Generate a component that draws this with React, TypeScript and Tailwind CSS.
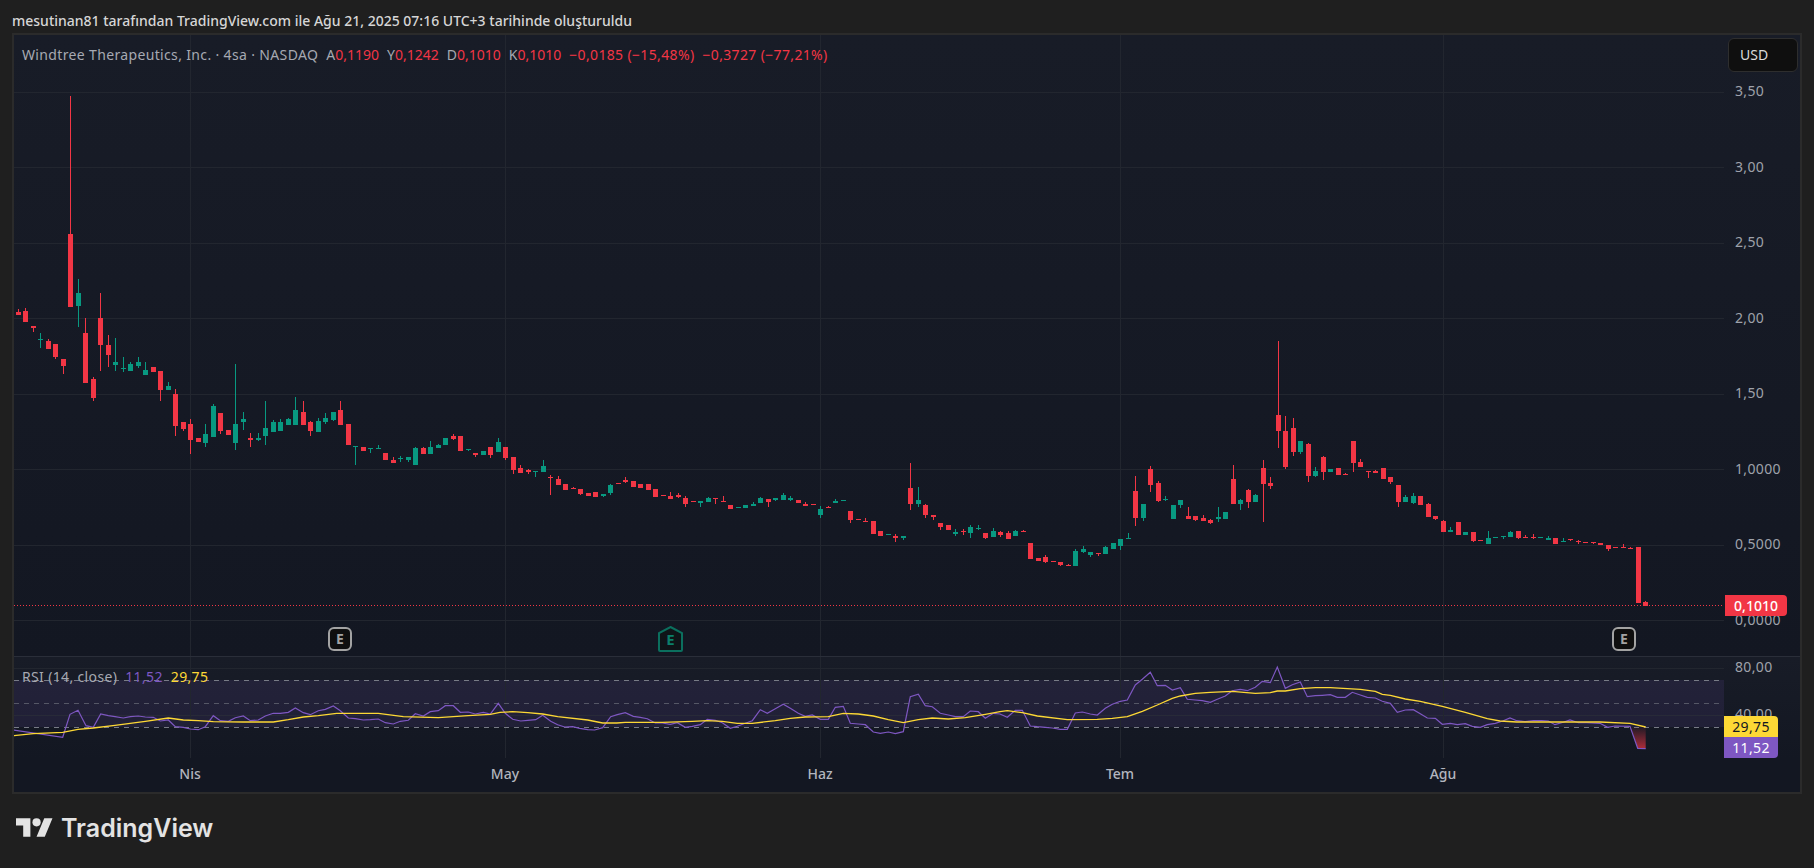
import React from 'react';

const RED = '#f23645';
const GREEN = '#089981';

// candle rows: x, wick top, body top, body bottom, wick bottom, 1 = up. Values are in 1/3 px relative to the group origin
type Row = [number, number, number, number, number, number];

const groupA: Row[] = [
  [55,687,696,705,705,0],[76,684,693,726,726,0],[100,738,738,744,756,0],[121,759,777,780,804,1],[145,777,783,807,807,0],[166,792,792,831,837,0],[190,837,837,858,882,0],[211,48,462,681,681,0],[235,597,639,678,741,1],[256,714,759,909,909,0],[280,891,897,954,963,0],[301,639,714,795,873,0],[325,765,795,825,861,0],[346,774,846,855,873,1],[370,831,864,867,876,1],[391,846,852,873,873,1],[415,831,846,858,864,1],[436,846,870,885,885,1],[460,861,861,876,876,0],[481,873,873,930,963,0],[505,906,918,930,930,1],[526,927,942,1038,1068,0],[550,1026,1026,1047,1053,0],[571,1017,1032,1080,1122,0],[595,1074,1074,1086,1086,0],[616,1032,1062,1089,1101,1],[640,972,978,1071,1071,1],[661,999,999,1053,1062,0],[685,1050,1050,1065,1065,0],[706,852,1032,1089,1110,1],[730,996,1017,1026,1050,1],[751,1059,1074,1080,1101,0],[775,1059,1074,1080,1083,1],[796,963,1044,1068,1095,1],[820,1020,1026,1056,1056,1],[841,1017,1026,1053,1053,1],[865,1014,1017,1035,1035,1],[886,951,990,1035,1035,1],[910,963,996,1035,1035,0],[931,1023,1026,1053,1068,0],[955,1014,1023,1056,1056,1],[976,999,1014,1026,1032,1],[1000,996,996,1020,1023,1],[1021,963,990,1035,1035,0],[1045,1032,1032,1095,1095,0],[1066,1098,1098,1101,1155,1],[1090,1101,1101,1113,1113,0],[1111,1104,1105,1108,1119,1],[1135,1095,1104,1107,1107,1],[1156,1119,1119,1140,1140,0],[1180,1131,1140,1149,1149,0],[1201,1128,1134,1137,1146,1],[1225,1131,1131,1140,1146,1],[1246,1101,1104,1155,1155,1],[1270,1101,1104,1122,1122,0],[1291,1083,1101,1122,1122,1],[1315,1092,1095,1104,1104,1],[1336,1074,1074,1095,1095,1],
];

const groupB: Row[] = [
  [40,162,168,177,180,0],[61,168,168,213,213,0],[85,207,207,210,213,1],[106,219,219,225,231,0],[130,213,213,225,225,1],[151,201,201,225,234,0],[175,174,186,216,216,1],[196,201,201,234,240,0],[220,231,231,270,282,0],[241,255,264,279,279,0],[265,267,271,275,282,0],[286,273,273,276,291,1],[310,240,258,276,276,1],[331,285,291,294,345,0],[355,288,297,315,315,0],[376,312,312,330,330,0],[400,321,324,327,327,0],[421,327,327,342,345,0],[445,339,339,348,348,0],[466,336,336,351,351,0],[490,342,342,348,351,1],[511,312,315,339,345,1],[535,309,309,312,312,0],[556,291,300,306,309,0],[580,303,303,321,321,0],[601,312,312,324,324,0],[625,312,312,330,330,0],[646,327,327,351,351,0],[670,345,345,348,348,0],[691,336,348,357,357,0],[715,339,345,351,354,0],[736,348,354,372,381,0],[760,363,363,366,366,0],[781,363,363,369,381,1],[805,351,354,366,366,1],[826,354,355,358,372,0],[850,348,363,366,366,0],[871,375,375,387,387,0],[895,381,381,384,384,1],[916,375,375,384,384,1],[940,366,372,378,378,1],[961,351,354,369,369,1],[985,357,357,366,381,0],[1006,354,354,360,363,1],[1030,339,345,360,360,1],[1051,348,354,360,363,1],[1075,360,360,369,369,0],[1096,366,372,378,378,0],[1120,372,372,375,375,0],[1141,378,387,405,414,1],[1165,378,381,384,384,0],[1186,357,363,369,369,1],[1210,360,360,363,363,1],[1231,393,393,420,429,0],[1255,417,417,420,420,0],[1276,414,423,426,426,0],[1300,423,423,462,462,0],[1321,453,453,468,468,0],[1345,462,462,465,465,1],[1366,462,468,474,486,0],[1390,468,468,474,480,1],
];

const groupC: Row[] = [
  [31,429,504,552,570,0],[55,501,540,552,561,1],[76,552,555,585,594,0],[100,585,585,591,600,0],[121,609,609,621,630,0],[145,615,615,630,630,0],[166,627,636,642,648,1],[190,627,633,636,645,0],[211,615,621,639,654,1],[235,615,624,627,630,1],[256,639,639,654,657,0],[280,624,633,651,651,1],[301,633,636,645,651,0],[325,633,639,657,657,0],[346,630,633,648,648,1],[370,630,633,636,636,0],[391,669,669,717,717,0],[415,714,714,723,723,0],[436,705,711,726,729,0],[460,723,723,726,726,0],[481,726,726,735,738,0],[505,732,735,738,738,0],[526,687,693,738,738,1],[550,678,687,696,699,1],[571,696,696,705,711,1],[595,699,699,702,708,0],[616,678,681,702,702,1],[640,669,669,687,687,1],[661,657,657,678,690,1],[685,639,654,657,657,1],[706,468,513,594,618,0],[730,552,552,594,603,1],[751,438,447,495,516,0],[775,483,489,543,546,0],[796,528,537,540,543,1],[820,555,555,597,597,1],[841,540,540,555,564,1],[865,561,588,597,597,0],[886,588,588,600,603,0],[910,585,594,603,603,0],[931,597,600,609,612,0],[955,561,591,597,606,1],[976,576,576,597,597,1],[1000,435,477,552,552,0],[1021,537,540,552,570,1],[1045,507,510,546,564,0],[1066,522,525,546,546,1],[1090,420,444,492,606,0],[1111,471,489,498,507,0],[1135,63,285,333,384,0],[1156,288,333,441,447,0],[1180,294,324,396,408,0],[1201,363,363,396,402,1],[1225,369,372,468,486,0],[1246,441,453,468,471,1],[1270,408,411,456,480,0],[1291,447,447,456,456,1],[1315,444,444,465,465,0],[1336,459,462,465,465,0],[1360,363,363,429,456,0],[1381,417,426,441,441,0],[1405,453,453,456,474,0],[1426,450,453,459,459,0],[1450,444,444,477,477,0],[1471,471,471,486,492,0],[1495,495,495,546,561,0],
];

const groupD: Row[] = [
  [16,165,171,186,186,1],[40,159,168,189,192,1],[61,168,168,195,195,0],[85,189,192,231,231,0],[106,228,228,237,240,0],[130,240,243,276,276,0],[151,261,270,276,276,1],[175,246,246,285,285,0],[196,276,276,285,285,1],[220,276,276,303,306,0],[241,300,300,303,303,0],[265,273,294,312,312,1],[286,291,291,294,294,1],[310,288,288,291,297,1],[331,273,276,291,291,1],[355,273,273,294,297,0],[376,285,291,294,294,0],[400,282,291,294,297,0],[421,291,291,294,294,1],[445,288,294,300,300,1],[466,294,294,312,312,0],[490,294,303,306,306,1],[511,297,297,300,303,0],[535,300,304,307,312,0],[556,306,306,309,309,0],[580,306,306,309,312,0],[601,309,309,315,315,0],[625,315,315,327,333,0],[646,321,321,324,324,0],[670,312,321,324,324,0],[691,321,324,327,327,0],[715,321,321,489,489,0],[736,483,486,498,498,0],
];

const candleGroups: { x0: number; y0: number; rows: Row[] }[] = [
  { x0: 0, y0: 80, rows: groupA },
  { x0: 440, y0: 380, rows: groupB },
  { x0: 900, y0: 320, rows: groupC },
  { x0: 1400, y0: 440, rows: groupD },
];

// rsi traces, same 1/3 px units
type Trace = { x0: number; pts: number[][] };

const rsiLine: Trace[] = [
  { x0: 0, pts: [[40,240],[188,262],[210,193],[234,181],[258,227],[280,232],[302,192],[325,197],[345,200],[370,204],[391,200],[415,198],[436,201],[460,202],[481,213],[505,210],[526,230],[550,232],[571,237],[595,239],[616,230],[640,197],[661,212],[685,214],[706,203],[730,198],[751,212],[775,210],[796,198],[820,190],[841,190],[865,187],[886,174],[910,188],[931,194],[955,182],[976,178],[1000,168],[1021,182],[1045,204],[1066,206],[1090,210],[1111,209],[1135,207],[1156,218],[1180,222],[1201,214],[1225,211],[1246,191],[1270,198],[1291,185],[1315,182],[1336,167],[1360,167],[1381,187],[1405,186],[1426,192],[1450,187],[1471,192],[1495,160]] },
  { x0: 500, pts: [[16,190],[38,208],[62,213],[83,211],[107,209],[128,196],[152,214],[173,224],[194,231],[218,230],[239,235],[263,239],[284,240],[308,233],[332,200],[352,194],[376,188],[400,199],[421,202],[442,206],[466,219],[487,219],[511,223],[532,218],[556,232],[577,229],[601,224],[622,208],[646,211],[667,218],[691,235],[712,229],[736,220],[757,212],[781,179],[802,190],[826,176],[850,163],[871,175],[895,190],[916,199],[937,195],[961,208],[985,208],[1006,172],[1030,169],[1051,220],[1075,222],[1096,224],[1120,246],[1141,250],[1165,246],[1186,251],[1210,245],[1231,140],[1255,133],[1276,167],[1297,170],[1321,190],[1345,195],[1366,200],[1390,200],[1411,183],[1435,185],[1456,205],[1480,190]] },
  { x0: 1000, pts: [[0,192],[22,202],[46,181],[67,181],[91,228],[112,230],[136,232],[157,234],[181,238],[202,238],[226,189],[247,186],[271,192],[292,195],[316,175],[337,163],[361,154],[382,150],[406,105],[427,88],[451,67],[472,107],[496,106],[517,120],[541,113],[562,148],[586,150],[607,152],[631,157],[652,148],[676,138],[697,122],[721,118],[742,122],[766,112],[787,94],[811,98],[832,51],[856,115],[877,104],[901,96],[922,140],[946,137],[967,136],[991,134],[1012,142],[1036,142],[1057,127],[1081,135],[1102,142],[1126,144],[1147,154],[1171,160],[1192,187],[1216,180],[1240,179],[1261,191],[1282,204],[1306,205],[1327,223],[1351,220],[1372,224],[1396,221],[1417,229],[1441,232],[1462,224],[1486,220]] },
  { x0: 1500, pts: [[8,213],[30,204],[50,212],[75,215],[100,212],[125,212],[145,213],[165,224],[190,217],[210,210],[235,218],[260,218],[300,220],[323,232],[345,228],[390,229],[413,295],[437,296]] },
];

const maLine: Trace[] = [
  { x0: 0, pts: [[40,257],[100,251],[188,247],[234,238],[280,234],[345,226],[436,214],[505,204],[550,210],[595,212],[640,215],[730,216],[820,216],[865,209],[910,201],[955,197],[1010,190],[1135,190],[1210,200],[1315,203],[1405,197],[1471,193]] },
  { x0: 500, pts: [[0,187],[38,185],[83,188],[128,192],[173,200],[263,210],[308,219],[350,219],[376,217],[487,217],[577,214],[622,212],[667,214],[712,220],[757,220],[826,212],[871,205],[916,201],[985,200],[1030,190],[1075,192],[1120,198],[1165,209],[1210,218],[1255,209],[1297,204],[1345,207],[1396,203],[1456,193]] },
  { x0: 1000, pts: [[0,185],[22,182],[67,188],[112,198],[202,209],[292,208],[337,205],[382,200],[427,184],[472,165],[517,145],[541,138],[586,130],[631,127],[697,124],[766,130],[811,128],[832,123],[856,123],[901,116],[946,113],[991,113],[1081,118],[1126,124],[1147,133],[1171,136],[1216,147],[1261,154],[1327,169],[1396,187],[1462,206]] },
  { x0: 1500, pts: [[0,213],[50,216],[145,216],[300,216],[390,220],[437,231]] },
];

const toPolyline = (traces: Trace[]) =>
  traces
    .flatMap((t) => t.pts.map(([x, y]) => `${(t.x0 + x / 3).toFixed(1)},${(650 + y / 3).toFixed(1)}`))
    .join(' ');

const monthLines = [190, 505, 820, 1120, 1443];
const priceLines = [92, 167, 243, 318, 394, 469, 545, 620];
const prices = ['3,50', '3,00', '2,50', '2,00', '1,50', '1,0000', '0,5000', '0,0000'];
const months = [
  { label: 'Nis', x: 190 },
  { label: 'May', x: 505 },
  { label: 'Haz', x: 820 },
  { label: 'Tem', x: 1120 },
  { label: 'Ağu', x: 1443 },
];

function Candle({ row, x0, y0 }: { row: Row; x0: number; y0: number }) {
  const [zx, wt, bt, bb, wb, up] = row;
  const x = Math.floor(x0 + zx / 3);
  const color = up ? GREEN : RED;
  const top = Math.round(y0 + bt / 3);
  const height = Math.max(1, Math.round(y0 + bb / 3) - top);
  const wickTop = Math.round(y0 + wt / 3);
  return (
    <g fill={color}>
      <rect x={x} y={wickTop} width={1} height={Math.round(y0 + wb / 3) - wickTop} />
      <rect x={x - 2} y={top} width={5} height={height} />
    </g>
  );
}

function EarningsMark({ left }: { left: string }) {
  return (
    <div className={`absolute ${left} top-[592px] flex h-6 w-6 items-center justify-center rounded-md border-2 border-[#a3a3a3] bg-[#0f0f0f] text-sm font-bold text-[#a3a3a3]`}>
      E
    </div>
  );
}

export default function App() {
  return (
    <div className="flex h-screen flex-col overflow-hidden bg-[#1f1f1f] font-['Noto_Sans',sans-serif]">
      <div className="flex h-[33px] items-end px-3 pb-0.5 text-sm font-medium text-[#d6d6d6]">
        mesutinan81 tarafından TradingView.com ile Ağu 21, 2025 07:16 UTC+3 tarihinde oluşturuldu
      </div>

      <div className="mx-3 flex flex-1 flex-col border-2 border-[#2b2b2b] bg-[#131722]">
        {/* price pane */}
        <div className="relative flex flex-1 border-b border-[#2a2e39] bg-gradient-to-b from-[#181c27] to-[#131722]">
          <div className="relative flex-1">
            <svg className="block h-full w-full" viewBox="14 35 1710 621" shapeRendering="crispEdges">
              {priceLines.map((y) => (
                <rect key={y} x={14} y={y} width={1710} height={1} fill="#22262f" />
              ))}
              {monthLines.map((x) => (
                <rect key={x} x={x} y={35} width={1} height={621} fill="#22262f" />
              ))}
              <line x1={14} x2={1724} y1={605.5} y2={605.5} stroke={RED} strokeDasharray="1 2" />
              {candleGroups.map((g) =>
                g.rows.map((row) => <Candle key={`${g.x0}-${row[0]}`} row={row} x0={g.x0} y0={g.y0} />),
              )}
            </svg>

            <div className="absolute left-2 top-3 flex gap-2 whitespace-nowrap text-sm leading-4 text-[#a6a9b2]">
              <span className="tracking-wide">Windtree Therapeutics, Inc. · 4sa · NASDAQ</span>
              <span className="flex gap-2 text-[#f23645]">
                <span><span className="text-[#a6a9b2]">A</span>0,1190</span>
                <span><span className="text-[#a6a9b2]">Y</span>0,1242</span>
                <span><span className="text-[#a6a9b2]">D</span>0,1010</span>
                <span><span className="text-[#a6a9b2]">K</span>0,1010</span>
                <span className="tracking-wide">−0,0185 (−15,48%)</span>
                <span className="tracking-wide">−0,3727 (−77,21%)</span>
              </span>
            </div>

            <EarningsMark left="left-[314px]" />
            <svg className="absolute left-[644px] top-[591px] h-[26px] w-[25px]" viewBox="0 0 25 26">
              <path d="M12.5 1 24 7v17a1 1 0 0 1-1 1H2a1 1 0 0 1-1-1V7z" fill="#0f1418" stroke="#0b6f5e" strokeWidth={2} />
              <text x={12.5} y={19} textAnchor="middle" fontSize={15} fontWeight={700} fill="#0b7f6a">E</text>
            </svg>
            <EarningsMark left="left-[1598px]" />
          </div>

          <div className="flex w-[76px] flex-col justify-between pb-7 pl-[11px] pt-12 text-sm leading-4 tracking-wide text-[#9fa2ab]">
            {prices.map((p) => (
              <span key={p}>{p}</span>
            ))}
          </div>

          <div className="absolute right-[2px] top-[3px] flex h-[34px] w-[70px] items-center rounded-md border border-[#2e2e2e] bg-[#0f0f0f] pl-[11px] text-sm text-[#dbdbdb]">
            USD
          </div>
          <div className="absolute left-[1711px] top-[560px] flex h-[21px] w-[62px] items-center justify-center rounded-r-sm bg-[#f23645] text-sm font-medium text-white">
            0,1010
          </div>
        </div>

        {/* rsi pane */}
        <div className="relative flex h-[101px] bg-gradient-to-b from-[#181c27] to-[#131722]">
          <div className="relative flex-1">
            <svg className="block h-full w-full" viewBox="14 657 1710 101">
              <defs>
                <linearGradient id="oversold" x1="0" x2="0" y1="727" y2="749" gradientUnits="userSpaceOnUse">
                  <stop offset="0" stopColor="#f23645" stopOpacity={0.05} />
                  <stop offset="1" stopColor="#f23645" stopOpacity={0.7} />
                </linearGradient>
              </defs>
              <rect x={14} y={680} width={1710} height={47} fill="#7e57c2" fillOpacity={0.12} />
              <rect x={14} y={668} width={1710} height={1} fill="#22262f" />
              <rect x={14} y={715} width={1710} height={1} fill="#282a38" />
              {monthLines.map((x) => (
                <rect key={x} x={x} y={657} width={1} height={101} fill="#22262f" />
              ))}
              <line x1={14} x2={1724} y1={680.5} y2={680.5} stroke="#787b86" strokeDasharray="5 5" />
              <line x1={14} x2={1724} y1={703.5} y2={703.5} stroke="#787b86" strokeOpacity={0.6} strokeDasharray="5 5" />
              <line x1={14} x2={1724} y1={727.5} y2={727.5} stroke="#787b86" strokeDasharray="5 5" />
              <polygon points="1631,727 1637.7,748.3 1645.7,748.6 1645.7,727" fill="url(#oversold)" />
              <polyline points={toPolyline(rsiLine)} fill="none" stroke="#7e57c2" strokeWidth={1.2} />
              <polyline points={toPolyline(maLine)} fill="none" stroke="#fdd835" strokeWidth={1.3} />
            </svg>

            <div className="absolute left-2 top-3 flex gap-2 whitespace-nowrap text-sm leading-4 tracking-wide text-[#a6a9b2]">
              <span>RSI (14, close)</span>
              <span className="text-[#7e57c2]">11,52</span>
              <span className="text-[#fdd835]">29,75</span>
            </div>
          </div>

          <div className="relative w-[76px] pl-[11px] text-sm leading-4 tracking-wide text-[#9fa2ab]">
            <span className="absolute top-[2px]">80,00</span>
            <span className="absolute top-[49px]">40,00</span>
            <div className="absolute left-0 top-[59px] flex h-[21px] w-[54px] items-center justify-center rounded-tr-sm bg-[#fdd835] text-[#131722]">
              29,75
            </div>
            <div className="absolute left-0 top-[80px] flex h-[21px] w-[54px] items-center justify-center rounded-br-sm bg-[#7e57c2] text-white">
              11,52
            </div>
          </div>
        </div>

        {/* time axis */}
        <div className="relative h-[34px] flex-none text-sm font-medium text-[#b2b5be]">
          {months.map((m) => (
            <span key={m.label} className="absolute top-2 -translate-x-1/2 leading-4" style={{ left: m.x - 14 }}>
              {m.label}
            </span>
          ))}
        </div>
      </div>

      <div className="flex h-[74px] items-center gap-2 px-4 pb-1.5 text-[#e3e3e3]">
        <svg className="h-[29px] w-[37px]" viewBox="0 0 36 28" fill="currentColor">
          <path d="M14 22H7V11H0V4h14v18zM28 22h-8l7.5-18h8L28 22z" />
          <circle cx="20" cy="8" r="4" />
        </svg>
        <span className="font-['Inter',sans-serif] text-[25px] font-semibold leading-none">TradingView</span>
      </div>
    </div>
  );
}
